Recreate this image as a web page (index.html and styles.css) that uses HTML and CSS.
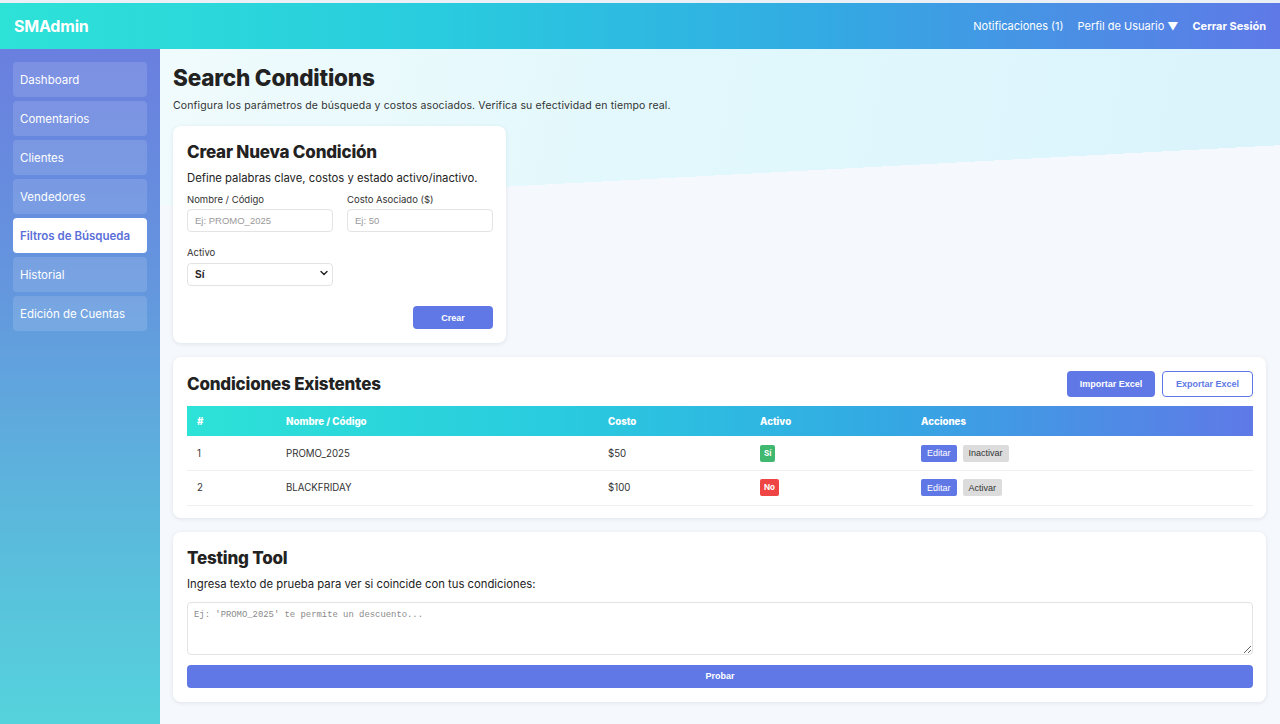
FILE: index.html
```html
<!DOCTYPE html>
<html lang="es">
<head>
<meta charset="utf-8">
<title>SMAdmin - Search Conditions</title>
<link rel="stylesheet" href="styles.css">
</head>
<body>
<div class="topstrip"></div>
<header class="topbar">
  <div class="logo">SMAdmin</div>
  <nav class="topnav">
    <a class="topnav-link">Notificaciones (1)</a>
    <a class="topnav-link">Perfil de Usuario ▼</a>
    <a class="topnav-link strong">Cerrar Sesión</a>
  </nav>
</header>
<div class="layout">
  <aside class="sidebar">
    <a class="side-item">Dashboard</a>
    <a class="side-item">Comentarios</a>
    <a class="side-item">Clientes</a>
    <a class="side-item">Vendedores</a>
    <a class="side-item active">Filtros de Búsqueda</a>
    <a class="side-item">Historial</a>
    <a class="side-item">Edición de Cuentas</a>
  </aside>
  <main class="main">
    <h1 class="page-title">Search Conditions</h1>
    <p class="page-sub">Configura los parámetros de búsqueda y costos asociados. Verifica su efectividad en tiempo real.</p>

    <section class="card card-create">
      <h2 class="card-title">Crear Nueva Condición</h2>
      <p class="card-desc">Define palabras clave, costos y estado activo/inactivo.</p>
      <div class="form-grid">
        <label class="field">
          <span class="field-label">Nombre / Código</span>
          <input class="input" type="text" placeholder="Ej: PROMO_2025">
        </label>
        <label class="field">
          <span class="field-label">Costo Asociado ($)</span>
          <input class="input" type="text" placeholder="Ej: 50">
        </label>
        <label class="field">
          <span class="field-label">Activo</span>
          <span class="select-wrap">
            <select class="select"><option>Sí</option><option>No</option></select>
            <svg class="chev" width="10" height="10" viewBox="0 0 10 10"><path d="M2 3.5 L5 6.5 L8 3.5" fill="none" stroke="#222" stroke-width="1.4" stroke-linecap="round" stroke-linejoin="round"/></svg>
          </span>
        </label>
      </div>
      <div class="form-actions">
        <button class="btn btn-primary btn-create">Crear</button>
      </div>
    </section>

    <section class="card card-list">
      <div class="card-head">
        <h2 class="card-title">Condiciones Existentes</h2>
        <div class="head-actions">
          <button class="btn btn-primary btn-excel">Importar Excel</button>
          <button class="btn btn-outline btn-excel">Exportar Excel</button>
        </div>
      </div>
      <table class="table">
        <colgroup>
          <col class="c1"><col class="c2"><col class="c3"><col class="c4"><col class="c5">
        </colgroup>
        <thead>
          <tr><th>#</th><th>Nombre / Código</th><th>Costo</th><th>Activo</th><th>Acciones</th></tr>
        </thead>
        <tbody>
          <tr>
            <td>1</td><td>PROMO_2025</td><td>$50</td>
            <td><span class="badge badge-yes">Sí</span></td>
            <td><button class="mini mini-edit">Editar</button><button class="mini mini-grey">Inactivar</button></td>
          </tr>
          <tr>
            <td>2</td><td>BLACKFRIDAY</td><td>$100</td>
            <td><span class="badge badge-no">No</span></td>
            <td><button class="mini mini-edit">Editar</button><button class="mini mini-grey">Activar</button></td>
          </tr>
        </tbody>
      </table>
    </section>

    <section class="card card-test">
      <h2 class="card-title">Testing Tool</h2>
      <p class="card-desc">Ingresa texto de prueba para ver si coincide con tus condiciones:</p>
      <textarea class="textarea" placeholder="Ej: 'PROMO_2025' te permite un descuento..."></textarea>
      <button class="btn btn-primary btn-block">Probar</button>
    </section>
  </main>
</div>
</body>
</html>
```
FILE: styles.css
```css
* { box-sizing: border-box; }
html, body { margin: 0; padding: 0; }
body {
  font-family: "Inter", "Noto Sans", sans-serif;
  color: #222;
  background: #f5f8fc;
  height: 100vh;
  display: flex;
  flex-direction: column;
  overflow: hidden;
}
.topstrip { height: 3px; background: #eaf0f5; flex: none; }
.topbar {
  flex: none;
  height: 46px;
  display: flex;
  align-items: center;
  justify-content: space-between;
  padding: 0 14px;
  background: linear-gradient(90deg, #2de2d7 0%, #29cbdf 35%, #33a9e3 65%, #5f79e7 100%);
  color: #fff;
}
.logo { font-size: 16px; font-weight: 700; letter-spacing: -0.2px; }
.topnav { display: flex; gap: 14px; align-items: center; }
.topnav-link { font-size: 11px; color: #fff; }
.topnav-link.strong { font-weight: 700; }

.layout { flex: 1; display: flex; min-height: 0; }
.sidebar {
  width: 160px;
  flex: none;
  padding: 13px 13px;
  display: flex;
  flex-direction: column;
  gap: 4px;
  background: linear-gradient(180deg, #6a7fdf 0%, #6496de 35%, #5bb9dc 70%, #55d3dc 100%);
}
.side-item {
  height: 35px;
  display: flex;
  align-items: center;
  padding: 0 7px;
  border-radius: 4px;
  background: rgba(255,255,255,0.13);
  color: #fff;
  font-size: 11.5px;
}
.side-item.active {
  background: #fff;
  color: #5b6fd8;
  font-weight: 600;
}

.main {
  flex: 1;
  padding: 14px 14px 20px 13px;
  background:
    linear-gradient(176.93deg, rgba(245,248,252,0) 156px, #f5f8fc 156px),
    linear-gradient(100deg, #f0fbfd 0%, #e2f8fc 40%, #d9f3fc 100%);
}
.page-title { margin: 0; font-size: 22.5px; font-weight: 800; line-height: 30px; color: #222; letter-spacing: -0.2px; }
.page-sub { margin: 5px 0 0; font-size: 10.5px; line-height: 15px; color: #333; letter-spacing: 0.13px; }

.card {
  background: #fff;
  border-radius: 8px;
  box-shadow: 0 1px 4px rgba(30,60,100,0.10);
  padding: 14px 13px 14px 14px;
}
.card-title { margin: 0; font-size: 17px; font-weight: 800; color: #222; line-height: 25px; letter-spacing: -0.2px; }
.card-desc { margin: 5px 0 0; font-size: 11.3px; line-height: 16px; color: #222; }

.card-create { width: 333px; margin-top: 13px; padding-bottom: 14px; }
.form-grid {
  display: grid;
  grid-template-columns: 146px 146px;
  column-gap: 14px;
  row-gap: 15px;
  margin-top: 8px;
}
.field { display: flex; flex-direction: column; }
.field-label { font-size: 9.5px; line-height: 12px; color: #333; margin-bottom: 3px; }
.input {
  height: 23px;
  border: 1px solid #e3e3e3;
  border-radius: 4px;
  padding: 0 7px;
  font-family: "Liberation Sans", Arial, sans-serif;
  font-size: 9.5px;
  color: #222;
  outline: none;
}
.input::placeholder { color: #9a9a9a; }
.select-wrap { position: relative; display: block; }
.select {
  width: 100%;
  height: 23px;
  border: 1px solid #e3e3e3;
  border-radius: 4px;
  padding: 0 7px;
  background: #fff;
  appearance: none;
  -webkit-appearance: none;
  font-family: "Liberation Sans", Arial, sans-serif;
  font-size: 10px;
  font-weight: 700;
  color: #222;
}
.chev { position: absolute; right: 4px; top: 6px; pointer-events: none; }
.form-actions { display: flex; justify-content: flex-end; margin-top: 20px; }

.btn {
  font-family: "Liberation Sans", Arial, sans-serif;
  font-weight: 700;
  font-size: 9px;
  border-radius: 4px;
  cursor: pointer;
}
.btn-primary { background: #5f78e6; color: #fff; border: none; }
.btn-outline { background: #fff; color: #5f78e6; border: 1.5px solid #5f78e6; }
.btn-create { width: 80px; height: 23px; }

.card-list { margin-top: 14px; padding-bottom: 12px; }
.card-head { display: flex; justify-content: space-between; align-items: center; }
.head-actions { display: flex; gap: 7px; }
.btn-excel { height: 26px; padding: 0 12px; }
.btn-excel.btn-primary { width: 88px; }
.btn-excel.btn-outline { width: 91px; }

.table {
  width: 100%;
  margin-top: 9px;
  border-collapse: collapse;
  table-layout: fixed;
  font-size: 9.7px;
}
.c1 { width: 89px; } .c2 { width: 322px; } .c3 { width: 152px; } .c4 { width: 161px; }
.table thead tr {
  background: linear-gradient(90deg, #2de2d7 0%, #29cbdf 35%, #33a9e3 65%, #5f79e7 100%);
}
.table th {
  height: 30px;
  text-align: left;
  padding: 0 10px;
  color: #fff;
  font-weight: 800;
}
.table td {
  padding: 0 10px;
  height: 34.5px;
  color: #333;
  border-bottom: 1px solid #eeeeee;
}
.badge {
  display: inline-block;
  padding: 0 4px;
  height: 17px;
  line-height: 17px;
  border-radius: 2px;
  color: #fff;
  font-size: 8px;
  font-weight: 700;
}
.badge-yes { background: #40b870; }
.badge-no { background: #ef4545; }
.mini {
  height: 17px;
  border: none;
  border-radius: 2px;
  padding: 0 6px;
  font-family: "Liberation Sans", Arial, sans-serif;
  font-size: 9px;
  margin-right: 6px;
}
.mini-edit { background: #5f78e6; color: #fff; }
.mini-grey { background: #dcdcdc; color: #333; }

.card-test { margin-top: 14px; }
.card-test .card-desc { margin-top: 5px; }
.textarea {
  display: block;
  width: 100%;
  height: 53px;
  margin-top: 10px;
  border: 1px solid #e3e3e3;
  border-radius: 4px;
  padding: 7px 6px;
  font-family: "Liberation Mono", monospace;
  font-size: 8.9px;
  resize: vertical;
  outline: none;
}
.textarea::placeholder { color: #8a8a8a; }
.btn-block { display: block; width: 100%; height: 23px; margin-top: 10px; }
```
